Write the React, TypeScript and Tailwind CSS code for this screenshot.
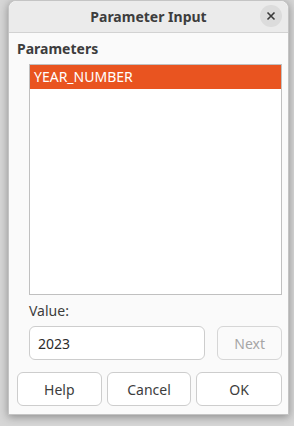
import React from 'react';

export default function App() {
    return (
        <div
            className="w-[294px] h-[426px] bg-[#d6d6d6] pl-[8px] overflow-hidden"
            style={{ fontFamily: '"Noto Sans", "Open Sans", sans-serif' }}
        >
            <div className="w-[281px] h-[415px] bg-[#fafafa] rounded-t-[8px] border border-[#c4c4c4] shadow-[0_2px_8px_rgba(0,0,0,0.35)] flex flex-col">
                {/* Header bar */}
                <div className="h-[32px] bg-[#ebebeb] border-b border-[#d2d2d2] rounded-t-[8px] flex items-center justify-center relative shrink-0">
                    <span className="text-[14px] font-bold text-[#3d3d3d]">Parameter Input</span>
                    <button className="absolute right-[6px] top-[4px] w-[22px] h-[22px] rounded-full bg-[#dcdcdc] flex items-center justify-center">
                        <svg width="10" height="10" viewBox="0 0 10 10">
                            <path d="M1.5 1.5 L8.5 8.5 M8.5 1.5 L1.5 8.5" stroke="#3a3a3a" strokeWidth="1.6" />
                        </svg>
                    </button>
                </div>

                {/* Body */}
                <div className="flex flex-col flex-1 pl-[8px] pr-[6px]">
                    <div className="mt-[6px] h-[20px] text-[14px] font-bold text-[#3d3d3d] leading-[20px]">Parameters</div>
                    <div className="ml-[12px] mt-[5px] h-[231px] bg-white border border-[#c0c0c0]">
                        <div className="h-[24px] bg-[#e95420] text-white text-[14px] leading-[24px] pl-[4px]">YEAR_NUMBER</div>
                    </div>

                    <div className="ml-[12px] mt-[6px] h-[20px] text-[14px] leading-[20px] text-[#3d3d3d]">Value:</div>
                    <div className="ml-[12px] mt-[5px] flex gap-[12px]">
                        <div className="w-[177px] h-[34px] bg-white border border-[#cdcdcd] rounded-[6px] flex items-center pl-[8px] text-[14px] text-[#2c2c2c]">
                            2023
                        </div>
                        <button className="w-[65px] h-[34px] border border-[#d6d6d6] rounded-[6px] text-[14px] text-[#a6a6a6] bg-[#fafafa]">
                            Next
                        </button>
                    </div>

                    <div className="mt-[12px] flex gap-[5px]">
                        <button className="w-[85px] h-[34px] border border-[#cdcdcd] rounded-[6px] bg-white text-[14px] text-[#3d3d3d]">Help</button>
                        <button className="w-[85px] h-[34px] border border-[#cdcdcd] rounded-[6px] bg-white text-[14px] text-[#3d3d3d]">Cancel</button>
                        <button className="w-[86px] h-[34px] border border-[#cdcdcd] rounded-[6px] bg-white text-[14px] text-[#3d3d3d]">OK</button>
                    </div>
                </div>
            </div>
        </div>
    );
}
